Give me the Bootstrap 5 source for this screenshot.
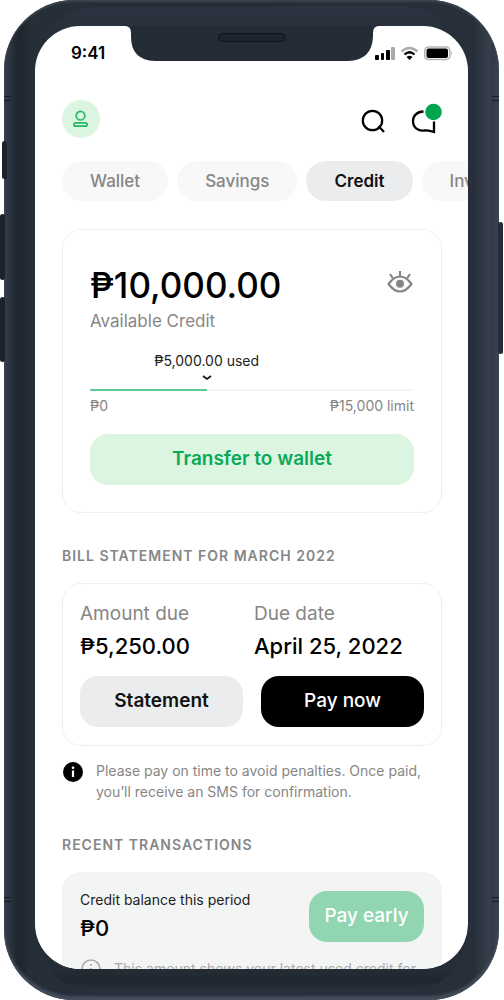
<!DOCTYPE html>
<html lang="en">
<head>
<meta charset="utf-8">
<meta name="viewport" content="width=device-width, initial-scale=1">
<title>Credit</title>
<link href="https://cdn.jsdelivr.net/npm/bootstrap@5.3.0/dist/css/bootstrap.min.css" rel="stylesheet">
<style>
body{font-family:Inter,"Liberation Sans",sans-serif;color:#000;background:#fff;line-height:20px}
.device{height:100vh;margin:0 5px 0 4px;padding:26px 31px 31px;border-radius:70px;
  background:linear-gradient(90deg,#343c49 0,#2b333f 7px,#1f2731 12px,#1e2630 18px,#262e38 26px,#262e38 50%,#282f3b calc(100% - 26px),#373f4c calc(100% - 9px),#303844 calc(100% - 7px),#3c4452 100%);
  box-shadow:inset 0 -4px 3px #454c5b,inset 0 2px 2px #3c454f}
.device::before{content:"";position:absolute;inset:7px;border-radius:64px;
  background:linear-gradient(180deg,#2b3440 0,#242c36 36px,#242c36 calc(100% - 24px),#1e2630 calc(100% - 12px),#2b323f 100%);
  clip-path:inset(0 25px round 62px)}
.side-key{position:absolute;width:5px;background:#1b222c;border-radius:3px}
.key-mute{left:-2px;top:141px;height:38px}
.key-up{left:-4px;top:214px;height:66px}
.key-down{left:-4px;top:297px;height:65px}
.key-power{right:-4px;top:222px;height:132px;background:#252c38}
.antenna{position:absolute;width:7px;height:5px;border:solid #161c25;border-width:1px 0}
.antenna-top{top:96px}.antenna-low{top:897px}
.view{background:#fff;border-radius:45px;height:100%}
.notch{position:absolute;top:-1px;left:50%;transform:translateX(-50%)}
.status{height:54px;padding:0 15px 0 36px;font-size:17px;font-weight:600}
.page{padding:20px 26px 0 27px}
.icon-btn{border:0;background:none;padding:0;line-height:0}
.avatar{width:38px;height:38px;background:#dcf5e1;margin-right:auto}
.tabs{gap:9px;margin:23px -26px 28px 0}
.tabs .nav-link{flex:none;height:40px;padding:10px 28px;border-radius:20px;background:#f8f8f8;color:#868686;font-weight:500;font-size:17px}
.tabs .nav-link.active{background:#ebecee;color:#111;font-weight:600}
.panel{border:1px solid #efefef;border-radius:19px}
.credit-panel{padding:34px 27px 27px}
.balance{font-size:35px;line-height:42px;font-weight:500}
.muted{color:#868686}
.t14{font-size:14px}.t17{font-size:17px}.t19{font-size:19px}
.available{margin:5px 0 20px}
.used-label{color:#222}
.track{height:2px;background:#f4f4f4;border-radius:1px;margin-top:8px}
.track .progress-bar{background:#5fc98f}
.limits{margin:5px 0 18px}
.action{height:51px;border:0;border-radius:18px;font-size:19px;font-weight:600;padding:0}
.action-soft{background:#dcf5e1;color:#09aa57}
.action-grey{background:#ebecee;color:#111}
.action-dark{background:#000;color:#fff;font-weight:500}
.action-early{background:#91d6b1;color:#fff;width:115px;font-weight:500}
.action-early:disabled{opacity:1;background:#91d6b1;color:#fff}
.section-title{font-size:14px;line-height:20px;font-weight:600;letter-spacing:1px;color:#868686;margin:0 0 17px}
.bill-title{margin-top:33px}
.bill{padding:20px 17px 18px;margin-bottom:14px}
.figure-lg{font-size:22px;line-height:28px;font-weight:500}
.bill-row{gap:18px}
.notice{gap:12px;line-height:21px;color:#868686;margin-bottom:33px}
.period{background:#f3f5f5;border-radius:19px;padding:18px 18px 30px}
.period-note{color:#aaa}
</style>
</head>
<body class="overflow-hidden">
<div class="device position-relative">
  <span class="side-key key-mute"></span><span class="side-key key-up"></span><span class="side-key key-down"></span><span class="side-key key-power"></span>
  <span class="antenna antenna-top start-0"></span><span class="antenna antenna-top end-0"></span>
  <span class="antenna antenna-low start-0"></span><span class="antenna antenna-low end-0"></span>
  <div class="view position-relative overflow-hidden">
    <svg class="notch" width="254" height="37" viewBox="0 0 254 37" aria-hidden="true">
      <path d="M0 0H254V1Q248 1 248 8V12Q247 35 223 36H30Q6 35 6 12V8Q6 1 0 1Z" fill="#242c36"/>
      <rect x="93.5" y="8.5" width="67" height="8" rx="4" fill="#1c222d" stroke="#11151e"/>
      <path d="M97 11H157M97 14H157" stroke="#272d38" stroke-dasharray="1 1"/>
    </svg>
    <div class="status d-flex align-items-center justify-content-between">
      <span>9:41</span>
      <svg width="79" height="16" viewBox="0 0 79 16" aria-hidden="true">
        <g fill="#000"><rect x="1" y="10" width="4" height="5" rx="1"/><rect x="7" y="8" width="3" height="7" rx="1"/><rect x="12" y="5" width="4" height="10" rx="1"/></g>
        <rect x="17" y="2" width="4" height="13" rx="1" fill="#aaa"/>
        <path d="M27.500 6.500Q35.500-.5 43.500 6.500" fill="none" stroke="#aaa" stroke-width="2.400"/>
        <path d="M30.500 9.500Q35.500 5 40.500 9.500" fill="none" stroke="#000" stroke-width="2.300"/>
        <path d="M32.500 12Q35.500 9.500 38.500 12L35.500 15Z"/>
        <rect x="50.800" y="2" width="25" height="12.500" rx="3.500" fill="#fff" stroke="#b3b3b3" stroke-width="1.500"/>
        <rect x="52.500" y="3.500" width="21.500" height="9.500" rx="2"/>
        <path d="M77 6.500Q79 8 77 10Z" fill="#b3b3b3"/>
      </svg>
    </div>
    <main class="page">
      <header class="d-flex align-items-center">
        <button class="icon-btn avatar rounded-circle d-flex align-items-center justify-content-center" aria-label="Profile">
          <svg width="18" height="18" viewBox="0 0 18 18" fill="none" stroke="#25b768" stroke-width="1.700"><circle cx="8.500" cy="5.700" r="4.300"/><rect x="1.900" y="12.800" width="13.200" height="3.400" rx="1.700"/></svg>
        </button>
        <button class="icon-btn me-4" aria-label="Search">
          <svg width="26" height="28" viewBox="0 0 26 28" fill="none" stroke="#000" stroke-width="2.200"><circle cx="12.500" cy="15.500" r="9.700"/><path d="M18.500 21L24 27"/></svg>
        </button>
        <button class="icon-btn" aria-label="Messages">
          <svg width="32" height="32" viewBox="0 0 32 32" fill="none" stroke="#000" stroke-width="2.300"><path d="M13.500 8.500C7 8.500 3 13 3 18C3 25 8.500 28 14 27.500C18 27 20 28 24 29V18.500"/><circle cx="23.500" cy="9" r="8.300" fill="#00a651" stroke="none"/></svg>
        </button>
      </header>
      <nav class="tabs nav flex-nowrap overflow-hidden">
        <a class="nav-link" href="#">Wallet</a><a class="nav-link" href="#">Savings</a><a class="nav-link active" href="#" aria-current="page">Credit</a><a class="nav-link" href="#">Invest</a>
      </nav>
      <section class="panel credit-panel">
        <div class="d-flex justify-content-between align-items-center">
          <div class="balance">₱10,000.00</div>
          <button class="icon-btn pb-1" aria-label="Hide balance">
            <svg width="28" height="28" viewBox="0 0 28 28" fill="none" stroke="#868686" stroke-width="2.200"><path d="M2.500 15C6.500 9.500 10 7.500 14 7.500S21.500 9.500 25.500 15C21.500 20.500 18 22.500 14 22.500S6.500 20.500 2.500 15Z" stroke-linejoin="round"/><circle cx="14" cy="14.800" r="4" fill="#868686" stroke="none"/><path d="M14 7.500V2M7 9.500L4 5M21 9.500L24 5"/></svg>
          </button>
        </div>
        <div class="available muted t17">Available Credit</div>
        <div class="used-label t14 text-center" style="width:72%">
          <div>₱5,000.00 used</div>
          <svg class="d-block mx-auto" width="10" height="10" viewBox="0 0 10 10" fill="none" stroke="#111" stroke-width="1.600"><path d="M1 5L5 8L9 5"/></svg>
        </div>
        <div class="progress track" role="progressbar" aria-label="Credit used" aria-valuenow="36" aria-valuemin="0" aria-valuemax="100"><div class="progress-bar" style="width:36%"></div></div>
        <div class="limits d-flex justify-content-between muted t14"><span>₱0</span><span>₱15,000 limit</span></div>
        <button class="btn action action-soft w-100">Transfer to wallet</button>
      </section>
      <h2 class="section-title bill-title">BILL STATEMENT FOR MARCH 2022</h2>
      <section class="panel bill">
        <div class="d-flex gap-1">
          <div class="w-50"><div class="muted t19 mb-2">Amount due</div><div class="figure-lg">₱5,250.00</div></div>
          <div class="w-50"><div class="muted t19 mb-2">Due date</div><div class="figure-lg text-nowrap">April 25, 2022</div></div>
        </div>
        <div class="d-flex bill-row mt-3">
          <button class="btn action action-grey w-50">Statement</button><button class="btn action action-dark w-50">Pay now</button>
        </div>
      </section>
      <div class="notice d-flex t14">
        <svg class="flex-shrink-0" width="22" height="22" viewBox="0 0 22 22"><circle cx="11" cy="12" r="10"/><path d="M11 10.500V17" stroke="#fff" stroke-width="2.200"/><circle cx="11" cy="7.800" r="1.300" fill="#fff"/></svg>
        <div>Please pay on time to avoid penalties. Once paid, you’ll receive an SMS for confirmation.</div>
      </div>
      <h2 class="section-title">RECENT TRANSACTIONS</h2>
      <section class="period">
        <div class="d-flex justify-content-between align-items-center">
          <div><div class="used-label t14 mb-1">Credit balance this period</div><div class="figure-lg">₱0</div></div>
          <button class="btn action action-early" disabled>Pay early</button>
        </div>
        <div class="notice period-note d-flex t14 mt-3">
          <svg class="flex-shrink-0" width="22" height="22" viewBox="0 0 22 22" fill="none" stroke="#aaa" stroke-width="1.600"><circle cx="11" cy="11" r="9"/><path d="M11 10V16M11 6V8"/></svg>
          <div>This amount shows your latest used credit for this billing period.</div>
        </div>
      </section>
    </main>
  </div>
</div>
<script src="https://cdn.jsdelivr.net/npm/bootstrap@5.3.0/dist/js/bootstrap.bundle.min.js"></script>
</body>
</html>
